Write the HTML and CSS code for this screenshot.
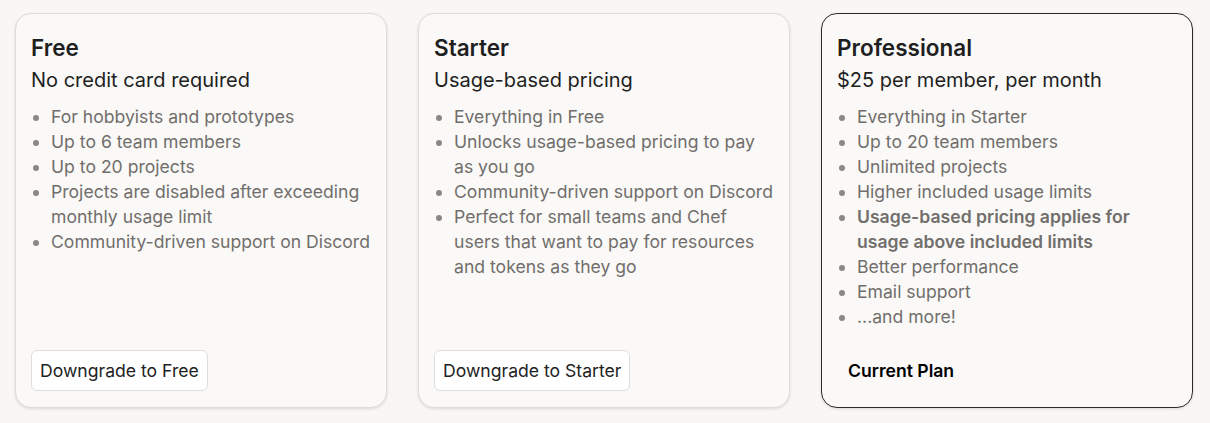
FILE: index.html
```html
<!DOCTYPE html>
<html>
<head>
<meta charset="utf-8">
<link rel="stylesheet" href="styles.css">
</head>
<body>
<div class="plans">
  <div class="card">
    <div class="body">
      <h2 class="title">Free</h2>
      <p class="sub">No credit card required</p>
      <ul class="features">
        <li>For hobbyists and prototypes</li>
        <li>Up to 6 team members</li>
        <li>Up to 20 projects</li>
        <li>Projects are disabled after exceeding monthly usage limit</li>
        <li>Community-driven support on Discord</li>
      </ul>
    </div>
    <div class="actions"><button class="btn">Downgrade to Free</button></div>
  </div>
  <div class="card">
    <div class="body">
      <h2 class="title">Starter</h2>
      <p class="sub">Usage-based pricing</p>
      <ul class="features">
        <li>Everything in Free</li>
        <li>Unlocks usage-based pricing to pay as you go</li>
        <li>Community-driven support on Discord</li>
        <li>Perfect for small teams and Chef users that want to pay for resources and tokens as they go</li>
      </ul>
    </div>
    <div class="actions"><button class="btn">Downgrade to Starter</button></div>
  </div>
  <div class="card current">
    <div class="body">
      <h2 class="title">Professional</h2>
      <p class="sub">$25 per member, per month</p>
      <ul class="features">
        <li>Everything in Starter</li>
        <li>Up to 20 team members</li>
        <li>Unlimited projects</li>
        <li>Higher included usage limits</li>
        <li class="strong">Usage-based pricing applies for usage above included limits</li>
        <li>Better performance</li>
        <li>Email support</li>
        <li>...and more!</li>
      </ul>
    </div>
    <div class="actions"><span class="current-label">Current Plan</span></div>
  </div>
</div>
</body>
</html>
```
FILE: styles.css
```css
* { box-sizing: border-box; }
html, body { margin: 0; padding: 0; }
body {
  background: #f8f7f6;
  font-family: Inter, "Noto Sans", sans-serif;
  color: #222;
  width: 1210px;
  height: 423px;
  overflow: hidden;
}
.plans {
  display: grid;
  grid-template-columns: repeat(3, 372px);
  column-gap: 31px;
  padding: 13px 0 0 15px;
}
.card {
  height: 395px;
  background: #faf9f8;
  border: 1px solid #dcdcdc;
  border-radius: 16px;
  box-shadow: 0 1px 3px rgba(0,0,0,0.12);
  padding: 17px 15px 16px 15px;
  display: flex;
  flex-direction: column;
  justify-content: space-between;
}
.card.current { border-color: #2a2a2a; }
.title {
  margin: 0;
  font-size: 22.5px;
  line-height: 34px;
  font-weight: 600;
  color: #1f1f1f;
}
.sub {
  margin: 0;
  font-size: 20px;
  line-height: 30px;
  color: #1f1f1f;
}
.features {
  margin: 9px 0 0 0;
  padding-left: 20px;
  font-size: 17.6px;
  line-height: 25px;
  color: #716e6b;
}
.features li::marker { color: #8a8886; }
.features .strong { font-weight: 600; }
.actions { display: flex; }
.btn {
  font-family: inherit;
  font-size: 17.6px;
  color: #222;
  background: #fff;
  border: 1px solid #dedede;
  border-radius: 6px;
  height: 41px;
  padding: 0 8px;
}
.current-label {
  display: inline-flex;
  align-items: center;
  height: 41px;
  padding: 0 11px;
  font-size: 17.6px;
  font-weight: 600;
  color: #000;
}
```
